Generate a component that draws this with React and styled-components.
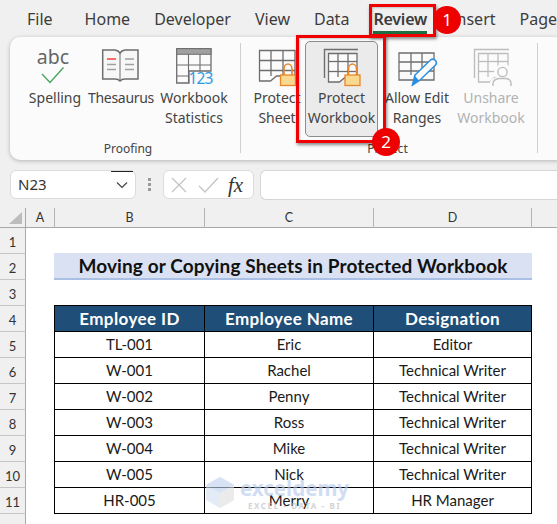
import React from "react";
import styled, { createGlobalStyle } from "styled-components";

const Global = createGlobalStyle`
  html, body { margin: 0; padding: 0; background: #f0f0f0; }
  * { box-sizing: border-box; }
`;

const UI = `"Noto Sans", "Liberation Sans", sans-serif`;
const CELL = `Lato, "Noto Sans", sans-serif`;

const Page = styled.div`
  position: relative;
  width: 557px;
  height: 524px;
  overflow: hidden;
  background: #f0f0f0;
  display: flex;
  flex-direction: column;
`;

const TabBar = styled.nav`
  height: 37px;
  flex: none;
  display: flex;
  gap: 24px;
  padding: 7px 0 0 27px;
  white-space: nowrap;
`;

const Tab = styled.div`
  position: relative;
  flex: none;
  height: 27px;
  font: ${(p) => (p.$active ? 600 : 400)} 16px/24px ${UI};
  letter-spacing: ${(p) => (p.$active ? "-0.2px" : "0")};
  color: #3c3c3c;
  margin-right: ${(p) => (p.$first ? "8px" : "0")};
  border-bottom: 3px solid ${(p) => (p.$active ? "#1e6e42" : "transparent")};
`;

const Ribbon = styled.section`
  flex: none;
  width: 600px;
  height: 123px;
  margin-left: 10px;
  padding: 4px 0 0 12px;
  display: flex;
  background: #fbfbfb;
  border-radius: 10px;
  box-shadow: 0 1px 4px rgba(0, 0, 0, 0.25);
`;

const Group = styled.div`
  flex: none;
  display: flex;
  flex-direction: column;
  padding-right: ${(p) => p.$pr || 0}px;
  padding-left: ${(p) => p.$pl || 0}px;
`;

const Items = styled.div`
  display: flex;
  height: 96px;
`;

const GroupLabel = styled.div`
  height: 21px;
  margin-top: 2px;
  text-align: center;
  font: 400 12px/20px ${UI};
  color: #444;
`;

const Separator = styled.div`
  flex: none;
  width: 1px;
  height: 110px;
  margin-top: 2px;
  background: #cfcfcf;
`;

const Item = styled.div`
  flex: none;
  width: ${(p) => p.$w}px;
  height: 96px;
  display: flex;
  flex-direction: column;
  align-items: center;
  border: 1px solid ${(p) => (p.$selected ? "#8c8c8c" : "transparent")};
  border-radius: 5px;
  background: ${(p) => (p.$selected ? "#ebebeb" : "transparent")};
`;

const IconBox = styled.svg`
  display: block;
  flex: none;
  overflow: visible;
  margin: 0 -1px -1px;
`;

const ItemLabel = styled.div`
  height: 20px;
  white-space: nowrap;
  font: 400 14px/20px ${UI};
  letter-spacing: ${(p) => p.$tight ? "-0.3px" : "0"};
  color: ${(p) => (p.$muted ? "#b2b2b2" : "#444")};
`;

const FormulaBar = styled.div`
  flex: none;
  height: 30px;
  margin-top: 10px;
  padding-left: 10px;
  display: flex;
  align-items: stretch;
`;

const NameBox = styled.div`
  flex: none;
  width: 126px;
  height: 29px;
  display: flex;
  justify-content: space-between;
  background: #fff;
  border: 1px solid #dcdcdc;
  border-radius: 6px;
  font: 400 15px/27px ${UI};
  color: #333;
  padding-left: 7px;
`;

const NameDrop = styled.div`
  width: 22px;
  margin: 0 2px 0 0;
  border-top: 1px solid #222;
  display: flex;
  align-items: center;
  justify-content: center;
`;

const Grip = styled.div`
  flex: none;
  width: 27px;
  display: flex;
  flex-direction: column;
  align-items: center;
  justify-content: center;
  gap: 2px;
  padding-bottom: 2px;
`;

const GripDot = styled.span`
  width: 3px;
  height: 3px;
  background: #9a9a9a;
`;

const FxBox = styled.div`
  flex: none;
  width: 91px;
  height: 29px;
  display: flex;
  align-items: center;
  background: #fff;
  border: 1px solid #dcdcdc;
  border-radius: 6px;
  padding-left: 7px;
`;

const FxLabel = styled.span`
  margin-left: 9px;
  font: italic 400 21px/24px "Liberation Serif", serif;
  color: #333;
`;

const FormulaInput = styled.div`
  flex: 1;
  height: 30px;
  margin-left: 6px;
  background: #fff;
  border: 1px solid #d6d6d6;
  border-right: 0;
  border-radius: 6px 0 0 6px;
`;

const Sheet = styled.div`
  flex: none;
  margin-top: 8px;
  display: grid;
  grid-template-columns: 26px 29px 150px 169px 158px 25px;
  grid-template-rows: 20px repeat(12, 26px);
  background: #fff;
`;

const Corner = styled.div`
  background: #f0f0f0;
  border-right: 1px solid #a8a8a8;
  border-bottom: 1px solid #a8a8a8;
  display: flex;
  align-items: flex-end;
  justify-content: flex-end;
  padding: 0 3px 3px 0;
`;

const ColHead = styled.div`
  background: #f0f0f0;
  border-right: 1px solid #b4b4b4;
  border-bottom: 1px solid #a8a8a8;
  text-align: center;
  font: 400 12.5px/19px ${CELL};
  color: #333;
  ${(p) => p.$last && "border-right: 0;"}
`;

const RowHead = styled.div`
  background: #f0f0f0;
  border-right: 1px solid #a8a8a8;
  border-bottom: 1px solid #c6c6c6;
  text-align: center;
  padding-top: 3px;
  font: 400 13px/22px ${CELL};
  color: #333;
`;

const Blank = styled.div`
  background: #fff;
`;

const TitleCell = styled.div`
  grid-column: 3 / span 3;
  align-self: start;
  height: 28px;
  margin: -1px 0 0 -1px;
  background: #d9e1f2;
  border-bottom: 3px solid #a9bfe4;
  text-align: center;
  font: 700 19px/26px ${CELL};
  letter-spacing: 0.12px;
  color: #111;
  white-space: nowrap;
`;

const HeadCell = styled.div`
  background: #1f4e78;
  border-right: 1px solid #000;
  border-bottom: 1px solid #000;
  box-shadow: 0 -1px 0 #000 ${(p) => (p.$first ? ", -1px 0 0 #000, -1px -1px 0 #000" : "")};
  text-align: center;
  font: 700 17px/25px ${CELL};
  letter-spacing: 0.4px;
  color: #fff;
`;

const DataCell = styled.div`
  background: #fff;
  border-right: 1px solid #000;
  border-bottom: 1px solid #000;
  box-shadow: ${(p) => (p.$first ? "-1px 0 0 #000" : "none")};
  text-align: center;
  font: 400 15px/25px ${CELL};
  color: #1a1a1a;
`;

const Callout = styled.div`
  position: absolute;
  left: ${(p) => p.$x}px;
  top: ${(p) => p.$y}px;
  width: ${(p) => p.$w}px;
  height: ${(p) => p.$h}px;
  border: 3px solid #f00000;
  box-shadow: 1px 2px 3px rgba(0, 0, 0, 0.45), inset 1px 1px 2px rgba(0, 0, 0, 0.2);
`;

const Badge = styled.div`
  position: absolute;
  left: ${(p) => p.$x - 14}px;
  top: ${(p) => p.$y - 14}px;
  width: 28px;
  height: 28px;
  border-radius: 50%;
  background: #ee0000;
  color: #fff;
  text-align: center;
  font: 400 17px/28px ${UI};
`;

const Watermark = styled.div`
  position: absolute;
  left: 205px;
  top: 475px;
  width: 150px;
  height: 36px;
  display: flex;
  gap: 5px;
  opacity: 0.62;
  pointer-events: none;
`;

const MarkText = styled.div`
  display: flex;
  flex-direction: column;
  align-items: center;
`;

const MarkName = styled.div`
  font: 700 20.5px/26px ${UI};
  color: #b4c9ec;
`;

const MarkSub = styled.div`
  font: 700 8px/10px ${UI};
  color: #b8b8b8;
  letter-spacing: 1.6px;
  white-space: nowrap;
`;

const G = "#6e6e6e";

const Lock = ({ x, y = 74, w = 15 }) => (
  <g>
    <path
      d={`M${x + 3.5} ${y} v-6 a4 5 0 0 1 ${w - 7} 0 v6`}
      fill="none"
      stroke="#e8872a"
      strokeWidth="1.6"
    />
    <rect x={x} y={y} width={w} height={10.5} fill="#f9d98f" stroke="#e8872a" strokeWidth="1.3" />
  </g>
);

const SheetLines = ({ x, y, r, b, vs, hs, c = G, fold = true }) => (
  <g fill="none" stroke={c} strokeWidth="1.3">
    <path
      d={
        fold
          ? `M${x} ${y} H${r} V${b - 5} H${x + 17} L${x + 11} ${b} H${x} Z`
          : `M${x} ${y} H${r} V${b} H${x} Z`
      }
      fill="#fbfbfb"
    />
    {vs.map((v) => (
      <path key={v} d={`M${v} ${y} V${b - 5}`} />
    ))}
    {hs.map((h) => (
      <path key={h} d={`M${x} ${h} H${r}`} />
    ))}
  </g>
);

const SpellIcon = () => (
  <IconBox width="66" height="47" viewBox="22 41 66 47">
    <text x="53" y="63" textAnchor="middle" fontFamily="Noto Sans" fontSize="19.5" fill="#666">abc</text>
    <path d="M42 73 L50 81.5 L63.5 66.5" fill="none" stroke="#4aa564" strokeWidth="1.4" />
  </IconBox>
);

const BookIcon = () => (
  <IconBox width="66" height="47" viewBox="88 41 66 47">
    <path
      d="M102.7 49 H115 Q118.5 49.5 120 52 Q121.5 49.5 125 49 H138 V78 H125 Q121.5 78 120 80 Q118.5 78 115 78 H102.7 Z"
      fill="#f7f7f7"
      stroke={G}
      strokeWidth="1.5"
    />
    <path d="M120 52 V79" stroke={G} strokeWidth="1" />
    <path d="M107 58 H116" stroke="#fa6c6c" strokeWidth="2" />
    <path d="M107 63.5 H116 M107 68.5 H116 M125 58 H134 M125 63.5 H134 M125 68.5 H134" stroke="#a0a0a0" strokeWidth="1.7" />
  </IconBox>
);

const StatsIcon = () => (
  <IconBox width="80" height="47" viewBox="154 41 80 47">
    <path d="M176.7 47.7 H211 V70 H189 V82 H176.7 Z" fill="#fbfbfb" stroke={G} strokeWidth="1.3" />
    <rect x="176.7" y="47.7" width="34.3" height="5.6" fill="#a0a0a0" stroke={G} strokeWidth="1" />
    <path d="M188.5 53 V82 M200 53 V70 M177 64 H211 M177 75 H189" stroke={G} strokeWidth="1.1" fill="none" />
    <text x="200.5" y="83" textAnchor="middle" fontFamily="Noto Sans" fontSize="15.5" fill="#2e9ae6" letterSpacing="-0.8">123</text>
  </IconBox>
);

const ProtectSheetIcon = () => (
  <IconBox width="56" height="47" viewBox="249 41 56 47">
    <SheetLines x={259.5} y={49.5} r={295} b={80} vs={[271, 283]} hs={[59.5, 69.5]} />
    <Lock x={280.5} />
  </IconBox>
);

const ProtectBookIcon = () => (
  <IconBox width="73" height="47" viewBox="305 41 73 47">
    <path d="M324.5 77 V48.5 H358" fill="none" stroke={G} strokeWidth="1.4" />
    <SheetLines x={328.5} y={52.5} r={357} b={81} vs={[338, 348]} hs={[60.5, 70.5]} />
    <Lock x={345} />
  </IconBox>
);

const AllowEditIcon = () => (
  <IconBox width="78" height="47" viewBox="378 41 78 47">
    <SheetLines x={399} y={52} r={434} b={79} vs={[411, 422]} hs={[61, 70]} fold={false} />
    <path d="M415 74 L430.5 59 Q433 57 435.5 59.5 Q437.5 62 435.5 64 L419.5 79.5 L412.5 84 Z" fill="#fbfbfb" stroke="#2b8fe0" strokeWidth="1.5" />
    <path d="M415 75 L419 79.5 L411.5 84.5 Z" fill="#2b8fe0" />
  </IconBox>
);

const UnshareIcon = () => (
  <IconBox width="70" height="47" viewBox="456 41 70 47">
    <path d="M474.5 77 V48.5 H509" fill="none" stroke="#bdbdbd" strokeWidth="1.4" />
    <SheetLines x={478.5} y={52.5} r={508} b={81} vs={[488, 498]} hs={[60.5, 70.5]} c="#bdbdbd" />
    <circle cx="503" cy="71.5" r="9" fill="#fbfbfb" />
    <path d="M490 87 V80 Q493 76 501 76 H505 Q512 76 512 80 V87 Z" fill="#fbfbfb" />
    <circle cx="502.5" cy="71" r="4.6" fill="#fbfbfb" stroke="#bdbdbd" strokeWidth="1.4" />
    <path d="M493 85 V82 Q494 78 499 77.5 H506 Q510.5 78 511 82 V85" fill="#fbfbfb" stroke="#bdbdbd" strokeWidth="1.4" />
  </IconBox>
);

const Hexagon = () => (
  <svg width="30" height="34" viewBox="0 0 30 34" style={{ flex: "none" }}>
    <path d="M15 2 L29 10 V25 L15 33 L1 25 V10 Z" fill="#d3e0f3" />
    <path d="M15 2 L29 10 L15 18 L1 10 Z" fill="#c0d2ee" />
    <path d="M15 18 L29 10 V25 L15 33 Z" fill="#e0e0e0" />
  </svg>
);

const proofing = [
  { w: 66, icon: <SpellIcon />, a: "Spelling" },
  { w: 66, icon: <BookIcon />, a: "Thesaurus", tight: true },
  { w: 80, icon: <StatsIcon />, a: "Workbook", b: "Statistics" },
];

const protect = [
  { w: 56, icon: <ProtectSheetIcon />, a: "Protect", b: "Sheet" },
  { w: 73, icon: <ProtectBookIcon />, a: "Protect", b: "Workbook", selected: true },
  { w: 78, icon: <AllowEditIcon />, a: "Allow Edit", b: "Ranges" },
  { w: 70, icon: <UnshareIcon />, a: "Unshare", b: "Workbook", muted: true },
];

const tabs = ["File", "Home", "Developer", "View", "Data", "Review", "Insert", "Page"];

const rows = [
  ["TL-001", "Eric", "Editor"],
  ["W-001", "Rachel", "Technical Writer"],
  ["W-002", "Penny", "Technical Writer"],
  ["W-003", "Ross", "Technical Writer"],
  ["W-004", "Mike", "Technical Writer"],
  ["W-005", "Nick", "Technical Writer"],
  ["HR-005", "Merry", "HR Manager"],
];

const RibbonItem = ({ it }) => (
  <Item $w={it.w} $selected={it.selected}>
    {it.icon}
    <ItemLabel $muted={it.muted} $tight={it.tight}>{it.a}</ItemLabel>
    <ItemLabel $muted={it.muted}>{it.b}</ItemLabel>
  </Item>
);

export default function App() {
  return (
    <Page>
      <Global />
      <TabBar>
        {tabs.map((t, i) => (
          <Tab key={t} $first={i === 0} $active={t === "Review"}>
            {t}
          </Tab>
        ))}
      </TabBar>

      <Ribbon>
        <Group $pr={6}>
          <Items>
            {proofing.map((it) => (
              <RibbonItem key={it.a} it={it} />
            ))}
          </Items>
          <GroupLabel>Proofing</GroupLabel>
        </Group>
        <Separator />
        <Group $pl={8} $pr={11}>
          <Items>
            {protect.map((it) => (
              <RibbonItem key={it.a + it.b} it={it} />
            ))}
          </Items>
          <GroupLabel>Protect</GroupLabel>
        </Group>
        <Separator />
        <Group $pl={12}>
          <Items>
            <Item $w={40}>
              <IconBox width="38" height="47" />
              <ItemLabel />
              <ItemLabel>C</ItemLabel>
            </Item>
          </Items>
        </Group>
      </Ribbon>

      <FormulaBar>
        <NameBox>
          N23
          <NameDrop>
            <svg width="12" height="8" viewBox="0 0 12 8">
              <path d="M1 1.5 L6 6.5 L11 1.5" fill="none" stroke="#444" strokeWidth="1.2" />
            </svg>
          </NameDrop>
        </NameBox>
        <Grip>
          <GripDot />
          <GripDot />
          <GripDot />
        </Grip>
        <FxBox>
          <svg width="48" height="16" viewBox="0 0 48 16">
            <path d="M1 1 L15 15 M15 1 L1 15" stroke="#c4c4c4" strokeWidth="1.3" fill="none" />
            <path d="M28 9 L34 15 L47 1" stroke="#c4c4c4" strokeWidth="1.3" fill="none" />
          </svg>
          <FxLabel>fx</FxLabel>
        </FxBox>
        <FormulaInput />
      </FormulaBar>

      <Sheet>
        <Corner>
          <svg width="13" height="12" viewBox="0 0 13 12">
            <path d="M13 0 V12 H0 Z" fill="#bdbdbd" />
          </svg>
        </Corner>
        {["A", "B", "C", "D"].map((c) => (
          <ColHead key={c}>{c}</ColHead>
        ))}
        <ColHead $last />

        <RowHead>1</RowHead>
        <Blank />
        <Blank />
        <Blank />
        <Blank />
        <Blank />

        <RowHead>2</RowHead>
        <Blank />
        <TitleCell>Moving or Copying Sheets in Protected Workbook</TitleCell>
        <Blank />

        <RowHead>3</RowHead>
        <Blank />
        <Blank />
        <Blank />
        <Blank />
        <Blank />

        <RowHead>4</RowHead>
        <Blank />
        <HeadCell $first>Employee ID</HeadCell>
        <HeadCell>Employee Name</HeadCell>
        <HeadCell>Designation</HeadCell>
        <Blank />

        {rows.map((r, i) => (
          <React.Fragment key={r[0]}>
            <RowHead>{i + 5}</RowHead>
            <Blank />
            <DataCell $first>{r[0]}</DataCell>
            <DataCell>{r[1]}</DataCell>
            <DataCell>{r[2]}</DataCell>
            <Blank />
          </React.Fragment>
        ))}

        <RowHead />
      </Sheet>

      <Watermark>
        <Hexagon />
        <MarkText>
          <MarkName>exceldemy</MarkName>
          <MarkSub>EXCEL - DATA - BI</MarkSub>
        </MarkText>
      </Watermark>

      <Callout $x={369} $y={4} $w={67} $h={33} />
      <Callout $x={296} $y={35} $w={90} $h={108} />
      <Badge $x={447} $y={20}>1</Badge>
      <Badge $x={386} $y={142}>2</Badge>
    </Page>
  );
}
